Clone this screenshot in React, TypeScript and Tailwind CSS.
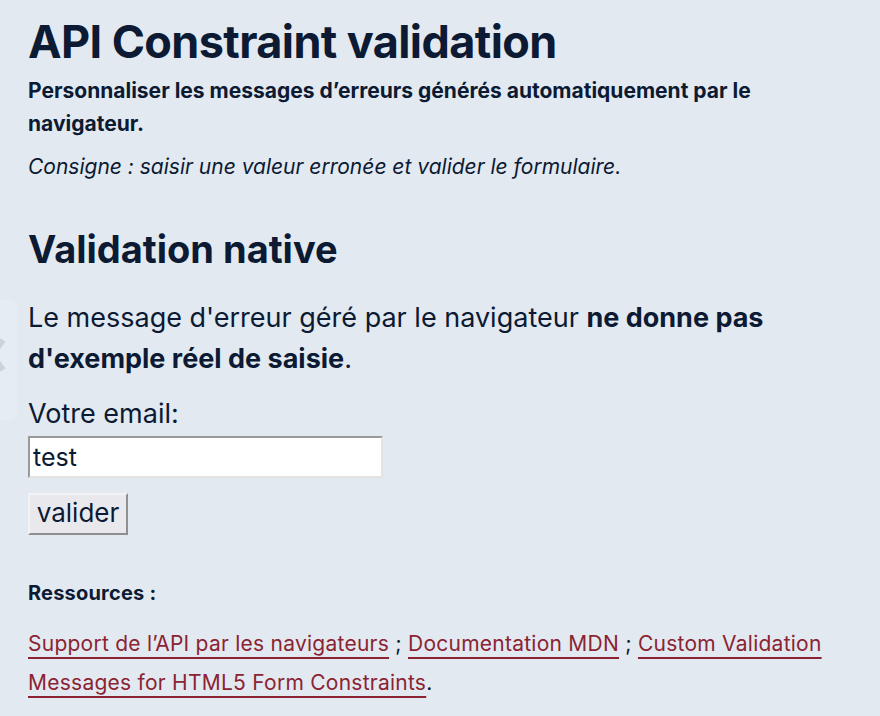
export default function App() {
  return (
    <div className="relative min-h-screen bg-[#e2e9f1] text-[#0c1a33] font-['Inter',sans-serif]">
      {/* side tab peeking from the left edge */}
      <div className="absolute left-0 top-[300px] h-[120px] w-[17px] rounded-r-lg bg-[#e6ecf3]">
        <svg width="20" height="36" viewBox="0 0 20 36" className="absolute left-[-13px] top-[37px] text-[#cdd3da]">
          <path d="M16 3 L5 18 L16 33" fill="none" stroke="currentColor" strokeWidth="6" strokeLinejoin="round" />
        </svg>
      </div>

      <div className="px-[28px] pt-[14px] pb-6">
        <h1 className="text-[45px] font-bold leading-[56px] tracking-[-0.6px]">API Constraint validation</h1>
        <p className="text-[21px] font-bold leading-[33px] mt-[4px]">
          Personnaliser les messages d’erreurs générés automatiquement par le navigateur.
        </p>
        <p className="text-[21px] italic leading-[33px] mt-[10px]">
          Consigne : saisir une valeur erronée et valider le formulaire.
        </p>

        <h2 className="text-[38px] font-bold leading-[46px] mt-[43px]">Validation native</h2>

        <p className="text-[27px] leading-[41px] mt-[25px]">
          Le message d'erreur géré par le navigateur <strong className="font-bold">ne donne pas d'exemple réel de saisie</strong>.
        </p>

        <form onSubmit={(e) => e.preventDefault()}>
          <label className="block text-[27px] leading-[41px] mt-[14px]" htmlFor="email">Votre email:</label>
          <input
            id="email"
            type="text"
            defaultValue="test"
            className="block mt-[2px] w-[355px] h-[42px] bg-white border-2 border-t-[#9a9a9a] border-l-[#9a9a9a] border-r-[#e3e3e3] border-b-[#e3e3e3] px-[3px] text-[25px] text-[#0c1a33] outline-none"
          />
          <button
            type="submit"
            className="block mt-[15px] h-[42px] w-[100px] bg-[#e9e9ed] border-2 border-t-[#f2f2f4] border-l-[#f2f2f4] border-r-[#8f8f8f] border-b-[#8f8f8f] text-[26px] leading-none pb-[3px]"
          >
            valider
          </button>
        </form>

        <p className="text-[20px] font-bold leading-[24px] mt-[46px] tracking-[0.2px]">Ressources :</p>
        <p className="text-[21px] leading-[39px] mt-[19px] tracking-[0.25px]">
          <a href="#" className="text-[#8b2332] underline decoration-[1.5px] underline-offset-[6px]">Support de l’API par les navigateurs</a>
          {' ; '}
          <a href="#" className="text-[#8b2332] underline decoration-[1.5px] underline-offset-[6px]">Documentation MDN</a>
          {' ; '}
          <a href="#" className="text-[#8b2332] underline decoration-[1.5px] underline-offset-[6px]">Custom Validation Messages for HTML5 Form Constraints</a>.
        </p>
      </div>
    </div>
  )
}
